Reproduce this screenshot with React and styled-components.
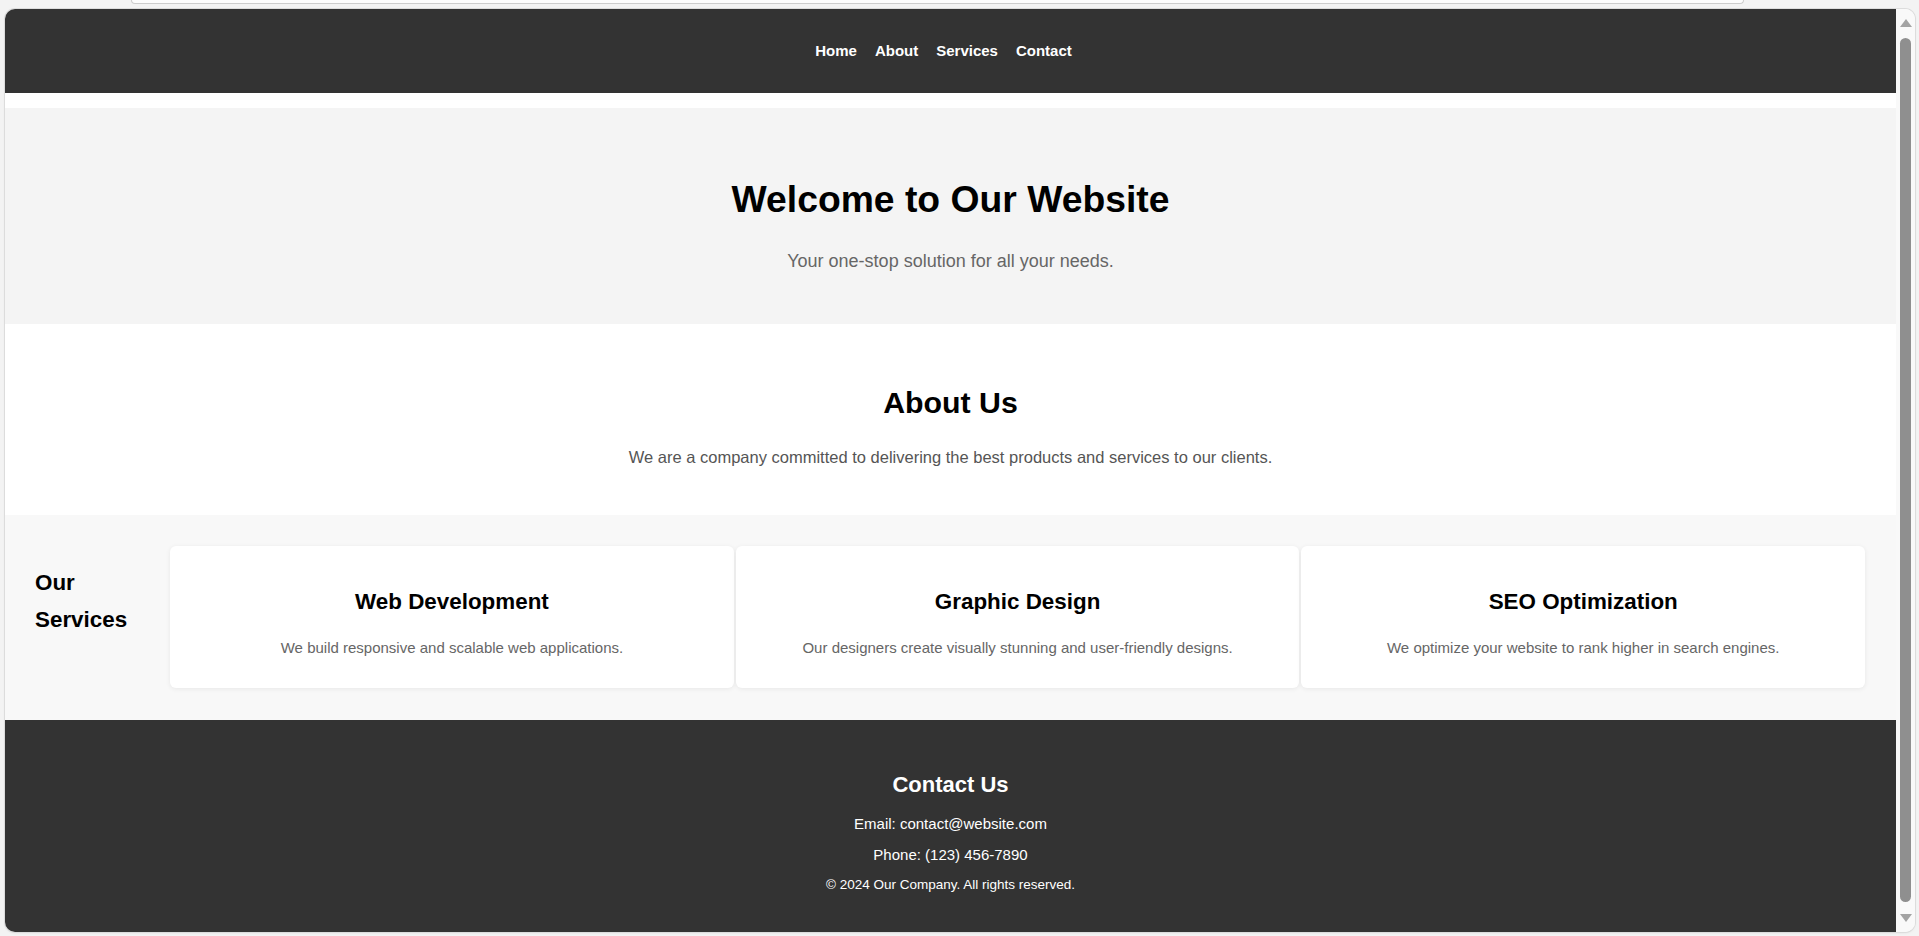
import React from 'react'
import styled, { createGlobalStyle } from 'styled-components'

const GlobalStyle = createGlobalStyle`
  html, body {
    margin: 0;
    padding: 0;
    background: #f3f3f3;
    overflow: hidden;
  }
  body {
    font-family: "Liberation Sans", Arial, sans-serif;
  }
`

const Screen = styled.div`
  height: 936px;
  box-sizing: border-box;
  padding: 0 4px 4px 5px;
  display: flex;
  flex-direction: column;
`

const AddressEdge = styled.div`
  height: 3px;
  margin: 0 171px 0 126px;
  background: #fdfdfd;
  border: 1px solid #cdcdcd;
  border-top: none;
  border-radius: 0 0 12px 12px;
`

const Window = styled.div`
  flex: 1;
  margin-top: 5px;
  display: flex;
  border-radius: 10px;
  overflow: hidden;
  background: #fff;
  box-shadow: 0 0 0 1px #dcdcdc, 0 1px 3px rgba(0, 0, 0, 0.08);
`

const Viewport = styled.div`
  flex: 1;
  display: flex;
  flex-direction: column;
  overflow: hidden;
  background: #fff;
`

const Scrollbar = styled.div`
  width: 19px;
  flex-shrink: 0;
  background: #f9f9f9;
  display: flex;
  flex-direction: column;
  align-items: center;
  padding: 10px 0;
  box-sizing: border-box;
`

const Thumb = styled.div`
  flex: 1;
  width: 11px;
  margin: 11px 0 12px;
  border-radius: 6px;
  background: #8f8f8f;
`

const Header = styled.header`
  background: #333;
  height: 84px;
  flex-shrink: 0;
  margin-bottom: 15px;
  display: flex;
  align-items: center;
  justify-content: center;
`

const Nav = styled.nav`
  display: flex;
  gap: 18px;
  padding-right: 14px;
`

const NavLink = styled.a`
  color: #fff;
  font-size: 15px;
  font-weight: bold;
  line-height: 18px;
  text-decoration: none;
`

const Hero = styled.section`
  height: 216px;
  flex-shrink: 0;
  box-sizing: border-box;
  padding-top: 69px;
  background: #f4f4f4;
  text-align: center;
`

const HeroTitle = styled.h1`
  margin: 0;
  font-size: 37.3px;
  line-height: 44px;
  color: #000;
`

const HeroText = styled.p`
  margin: 28px 0 0;
  font-size: 18px;
  line-height: 24px;
  color: #666;
`

const About = styled.section`
  height: 191px;
  flex-shrink: 0;
  box-sizing: border-box;
  padding-top: 61px;
  background: #fff;
  text-align: center;
`

const AboutTitle = styled.h2`
  margin: 0;
  font-size: 30.3px;
  line-height: 36px;
  color: #000;
`

const AboutText = styled.p`
  margin: 24px 0 0;
  font-size: 16.5px;
  line-height: 24px;
  color: #555;
`

const Services = styled.section`
  flex-shrink: 0;
  display: flex;
  padding: 31px 31px 32px 30px;
  background: #f8f8f8;
`

const ServicesTitle = styled.h2`
  width: min-content;
  margin: 18px 43px 0 0;
  font-size: 22.4px;
  line-height: 37px;
  color: #000;
`

const Cards = styled.div`
  flex: 1;
  display: flex;
  gap: 2px;
`

const Card = styled.div`
  flex: 1;
  padding: 42px 20px 28px;
  background: #fff;
  border-radius: 6px;
  box-shadow: 0 1px 5px rgba(0, 0, 0, 0.07);
  text-align: center;
`

const CardTitle = styled.h3`
  margin: 0;
  font-size: 22.4px;
  line-height: 28px;
  color: #000;
`

const CardText = styled.p`
  margin: 20px 0 0;
  font-size: 15px;
  line-height: 24px;
  color: #666;
`

const Footer = styled.footer`
  flex: 1;
  padding: 50px 0 36px;
  background: #333;
  color: #fff;
  text-align: center;
  display: flex;
  flex-direction: column;
  gap: 7px;
`

const FooterTitle = styled.h2`
  margin: 0 0 5px;
  font-size: 22px;
  line-height: 30px;
`

const FooterLine = styled.p`
  margin: 0;
  font-size: ${(p) => (p.small ? '13.5px' : '15px')};
  line-height: ${(p) => (p.small ? '22px' : '24px')};
`

const Arrow = ({ down }) => (
  <svg width="12" height="8" viewBox="0 0 12 8">
    <polygon points={down ? '0,0 12,0 6,8' : '0,8 12,8 6,0'} fill="#a3a3a3" />
  </svg>
)

const services = [
  ['Web Development', 'We build responsive and scalable web applications.'],
  ['Graphic Design', 'Our designers create visually stunning and user-friendly designs.'],
  ['SEO Optimization', 'We optimize your website to rank higher in search engines.'],
]

export default function App() {
  return (
    <>
      <GlobalStyle />
      <Screen>
        <AddressEdge />
        <Window>
          <Viewport>
            <Header>
              <Nav>
                <NavLink href="#home">Home</NavLink>
                <NavLink href="#about">About</NavLink>
                <NavLink href="#services">Services</NavLink>
                <NavLink href="#contact">Contact</NavLink>
              </Nav>
            </Header>
            <Hero>
              <HeroTitle>Welcome to Our Website</HeroTitle>
              <HeroText>Your one-stop solution for all your needs.</HeroText>
            </Hero>
            <About>
              <AboutTitle>About Us</AboutTitle>
              <AboutText>We are a company committed to delivering the best products and services to our clients.</AboutText>
            </About>
            <Services>
              <ServicesTitle>Our Services</ServicesTitle>
              <Cards>
                {services.map(([title, text]) => (
                  <Card key={title}>
                    <CardTitle>{title}</CardTitle>
                    <CardText>{text}</CardText>
                  </Card>
                ))}
              </Cards>
            </Services>
            <Footer>
              <FooterTitle>Contact Us</FooterTitle>
              <FooterLine>Email: contact@website.com</FooterLine>
              <FooterLine>Phone: (123) 456-7890</FooterLine>
              <FooterLine small>© 2024 Our Company. All rights reserved.</FooterLine>
            </Footer>
          </Viewport>
          <Scrollbar>
            <Arrow />
            <Thumb />
            <Arrow down />
          </Scrollbar>
        </Window>
      </Screen>
    </>
  )
}
